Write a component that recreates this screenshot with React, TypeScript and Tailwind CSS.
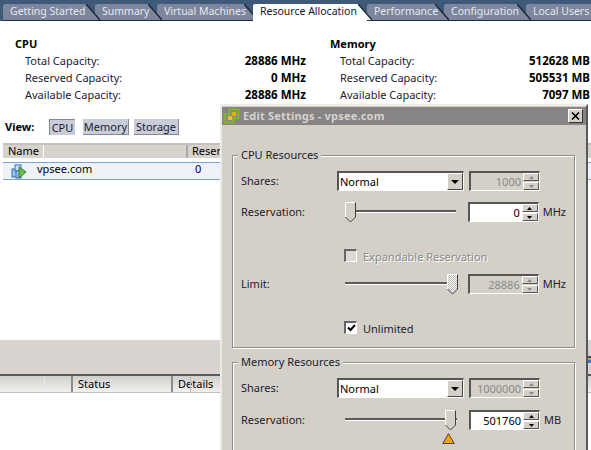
import React from "react";

const tabs: [string, number, boolean][] = [
  ["Getting Started", 92, false],
  ["Summary", 62, false],
  ["Virtual Machines", 96, false],
  ["Resource Allocation", 114, true],
  ["Performance", 77, false],
  ["Configuration", 82, false],
  ["Local Users", 80, false],
];

function Tab({ label, width, active, z }: { label: string; width: number; active: boolean; z: number }) {
  const fill = active ? "#ffffff" : "#7c869c";
  return (
    <div
      className={`relative flex-none pl-[7px] rounded-tl-[2px] leading-[15px] text-[10.5px] whitespace-nowrap ${active ? "h-[18px] bg-white text-[#10182a]" : "h-[17px] bg-[#7c869c] text-[#e6e8f0] border-b border-[#1c2c40]"}`}
      style={{ width, zIndex: z }}
    >
      <svg className="absolute right-[-5px] top-0 w-[14px] h-[17px]" viewBox="0 0 14 17">
        <polygon points="0,0 9,0 9,10.300" fill="#3f5a78" />
        <polygon points="0,0 14,16 0,16" fill={fill} />
        <line x1="0" y1="0" x2="14" y2="16" stroke="#14202e" strokeWidth="1.2" />
      </svg>
      <span className="relative">{label}</span>
    </div>
  );
}

function CapRow({ label, value, right }: { label: string; value: string; right: number }) {
  return (
    <div className="flex justify-between h-[17px] leading-[17px] pl-[10px]" style={{ width: right }}>
      <span className="text-[#1c2030]">{label}</span>
      <span className="font-bold text-black text-[11.5px]">{value}</span>
    </div>
  );
}

function Spin({ value, disabled }: { value: string; disabled?: boolean }) {
  return (
    <div className={`flex h-[20px] w-[71px] items-stretch border-t-2 border-l-2 border-t-[#555] border-l-[#555] border-r border-b border-r-white border-b-white ${disabled ? "bg-[#d4d0c8] text-[#8a8a8a]" : "bg-white text-black"}`}>
      <div className="flex-1 text-right pr-[2px] leading-[17px]">{value}</div>
      <div className="flex flex-col w-[16px] gap-px">
        {[0, 1].map((i) => (
          <div key={i} className="flex-1 bg-[#d4d0c8] border-t border-l border-white border-b-[#555] border-r-[#555] border-r border-b flex items-center justify-center">
            <svg className="w-[5px] h-[3px]" viewBox="0 0 5 3">
              <polygon points={i === 0 ? "2.5,0 5,3 0,3" : "0,0 5,0 2.5,3"} fill={disabled ? "#8a8a8a" : "#000"} />
            </svg>
          </div>
        ))}
      </div>
    </div>
  );
}

function Select() {
  return (
    <div className="flex h-[20px] w-[127px] border-t-2 border-l-2 border-t-[#555] border-l-[#555] border-r border-b border-r-white border-b-white bg-white text-black">
      <div className="flex-1 pl-[1px] leading-[18px]">Normal</div>
      <div className="w-[16px] bg-[#d4d0c8] border-t border-l border-white border-r border-b border-r-[#444] border-b-[#444] flex items-center justify-center">
        <svg className="w-[8px] h-[4px]" viewBox="0 0 8 4">
          <polygon points="0,0 8,0 4,4" fill="#000" />
        </svg>
      </div>
    </div>
  );
}

function Slider({ pos, hatched }: { pos: number; hatched?: boolean }) {
  return (
    <div className="relative w-[112px] h-[20px] ml-[8px]">
      <div className="absolute left-0 right-0 top-[8px] h-[3px] bg-[#5a5a5a] border-b border-white" />
      <svg className="absolute top-0 w-[11px] h-[21px]" style={{ left: pos }} viewBox="0 0 11 21">
        <defs>
          <pattern id="hatch" width="2" height="2" patternUnits="userSpaceOnUse">
            <rect width="2" height="2" fill="#b8b5ae" />
            <rect width="1" height="1" fill="#ffffff" />
            <rect x="1" y="1" width="1" height="1" fill="#ffffff" />
          </pattern>
        </defs>
        <polygon points="0.5,0.5 10.5,0.5 10.5,15 5.5,20 0.5,15" fill={hatched ? "url(#hatch)" : "#d4d0c8"} />
        <polyline points="0.5,15 0.5,0.5 10.5,0.5" fill="none" stroke="#fff" />
        <polyline points="10.5,0.5 10.5,15 5.5,20 0.5,15" fill="none" stroke="#404040" />
      </svg>
    </div>
  );
}

function Check({ checked }: { checked?: boolean }) {
  return (
    <div className={`flex-none w-[13px] h-[13px] border-t-2 border-l-2 border-t-[#666] border-l-[#666] border-r border-b border-white flex items-center justify-center ${checked ? "bg-white" : "bg-[#dcd8d2]"}`}>
      {checked && (
        <svg className="w-[9px] h-[8px]" viewBox="0 0 9 8">
          <polyline points="1,3.5 3.5,6 8,1" fill="none" stroke="#000" strokeWidth="2" />
        </svg>
      )}
    </div>
  );
}

function Group({ title, children, className }: { title: string; children: React.ReactNode; className?: string }) {
  return (
    <div className={`relative border border-[#8f8f8b] shadow-[1px_1px_0_#fff,inset_1px_1px_0_#fff] ml-[10px] mr-[11px] px-[8px] ${className ?? ""}`}>
      <div className="absolute left-[5px] top-[-9px] bg-[#d4d0c8] px-[3px] leading-[15px] text-[#1c2030]">{title}</div>
      {children}
    </div>
  );
}

function Row({ label, children }: { label: string; children: React.ReactNode }) {
  return (
    <div className="flex items-center h-[20px]">
      <span className="w-[96px] flex-none text-[#1c2030] pt-px">{label}</span>
      {children}
    </div>
  );
}

function App() {
  return (
    <div className="relative w-[591px] h-[450px] overflow-hidden bg-white text-[11px] font-['Noto_Sans',sans-serif]">
      <div className="flex flex-col h-full">
        <div className="h-[21px] bg-[#3f5a78] pt-[4px] pl-[3px] flex flex-none overflow-hidden">
          {tabs.map(([l, w, a], i) => (
            <Tab key={l} label={l} width={w} active={a} z={a ? 20 : 10 - i} />
          ))}
        </div>

        <div className="flex pt-[15px] flex-none h-[98px]">
          <div className="pl-[15px] w-[330px]">
            <div className="font-bold h-[16px] leading-[16px] text-black">CPU</div>
            <CapRow label="Total Capacity:" value="28886 MHz" right={291} />
            <CapRow label="Reserved Capacity:" value="0 MHz" right={291} />
            <CapRow label="Available Capacity:" value="28886 MHz" right={291} />
          </div>
          <div className="flex-1">
            <div className="font-bold h-[16px] leading-[16px] text-black">Memory</div>
            <CapRow label="Total Capacity:" value="512628 MB" right={260} />
            <CapRow label="Reserved Capacity:" value="505531 MB" right={260} />
            <CapRow label="Available Capacity:" value="7097 MB" right={260} />
          </div>
        </div>

        <div className="flex items-center h-[16px] pl-[5px] flex-none">
          <span className="font-bold w-[44px] text-black">View:</span>
          <span className="w-[26px] h-[16px] bg-[#c9cdda] border-l border-t border-[#888] text-center leading-[15px] text-[#1c2030]">CPU</span>
          <span className="ml-[8px] w-[46px] h-[16px] bg-[#c9cdda] border-r border-b border-[#888] text-center leading-[15px] text-[#1c2030]">Memory</span>
          <span className="ml-[5px] w-[45px] h-[16px] bg-[#c9cdda] border-r border-b border-[#888] text-center leading-[15px] text-[#1c2030]">Storage</span>
        </div>

        <div className="flex mt-[8px] ml-[3px] h-[16px] flex-none bg-[#d6d3cd] border-t-2 border-[#c4c1bb] border-b border-b-white text-black leading-[12px]">
          <div className="w-[41px] pl-[5px] border-r border-white">Name</div>
          <div className="w-[144px] border-r-2 border-[#aaa]" />
          <div className="flex-1 pl-[4px]">Reser</div>
        </div>
        <div className="flex items-center mt-[3px] ml-[3px] h-[18px] flex-none bg-[#eef3fb] border-y border-[#79a4d2] text-black pb-[3px]">
          <svg className="w-[16px] h-[15px] ml-[8px] mt-[3px] flex-none" viewBox="0 0 16 15">
            <rect x="1" y="5" width="6" height="8" fill="#9cc4ec" stroke="#2a6fb0" />
            <rect x="4" y="1" width="6" height="6" fill="#cfe3f6" stroke="#2a6fb0" />
            <rect x="5" y="7" width="5" height="7" fill="#9cc4ec" stroke="#2a6fb0" />
            <polygon points="8,3 15,8 8,14" fill="#6cc04a" stroke="#2f7a2a" />
          </svg>
          <span className="ml-[10px] w-[158px]">vpsee.com</span>
          <span>0</span>
        </div>

        <div className="flex-1 border-b-2 border-[#d8d5d0]" />

        <div className="h-[34px] flex-none bg-[#d8d3cf] border-b-2 border-[#55585e] flex justify-end items-center pt-[3px]">
          <svg className="w-[3px] h-[7px]" viewBox="0 0 3 7">
            <rect width="3" height="2" fill="#2a4a80" />
            <rect y="2" width="3" height="2" fill="#e0a030" />
            <rect y="4" width="3" height="3" fill="#3a78c0" />
          </svg>
        </div>
        <div className="relative flex h-[17px] flex-none bg-gradient-to-b from-[#d0cfcc] to-[#f2f1ef] border-b border-[#bfbfbf] text-black leading-[15px]">
          <div className="w-[45px] border-r border-[#e8e8e8]" />
          <div className="w-[28px] border-r-2 border-[#8c8c8c]" />
          <div className="w-[100px] pl-[5px] border-r-2 border-[#8c8c8c]">Status</div>
          <div className="flex-1 pl-[5px]">Details</div>
          <div className="absolute left-[190px] top-0 bottom-0 w-px bg-[#bdbdbd]" />
        </div>
        <div className="h-[57px] flex-none bg-white" />
      </div>

      <div className="absolute z-30 left-[220px] top-[104px] w-[368px] h-[346px] bg-[#d4d0c8] border-l-2 border-t-2 border-[#ecebe7] border-r-2 border-r-[#55585e] text-[#1c2030]">
        <div className="mt-px flex items-center h-[18px] bg-[#868484] pl-px pr-[3px]">
          <svg className="w-[17px] h-[16px] flex-none" viewBox="0 0 17 16">
            <path d="M6.500 1.500h9v8.500H10.500v4.500H1.500V6H6.500z" fill="#8a8a70" stroke="#7eb52e" strokeWidth="2" />
            <rect x="9" y="4" width="4" height="4" fill="#e8a820" />
            <rect x="5" y="8" width="4" height="4" fill="#f2bc2c" />
          </svg>
          <span className="ml-[3px] font-bold text-[#d6d3ce] flex-1 tracking-[0.2px]">Edit Settings - vpsee.com</span>
          <div className="w-[15px] h-[14px] bg-[#d4d0c8] border border-t-white border-l-white border-r-[#333] border-b-[#333] flex items-center justify-center">
            <svg className="w-[9px] h-[8px]" viewBox="0 0 9 8">
              <path d="M1 0.5L8 7.5M8 0.5L1 7.5" stroke="#000" strokeWidth="1.6" />
            </svg>
          </div>
        </div>

        <div className="pt-[30px]">
          <Group title="CPU Resources" className="h-[193px] pt-[15px]">
            <Row label="Shares:">
              <Select />
              <div className="ml-[5px]"><Spin value="1000" disabled /></div>
            </Row>
            <div className="mt-[11px]">
              <Row label="Reservation:">
                <Slider pos={0} />
                <div className="ml-[12px]"><Spin value="0" /></div>
                <span className="ml-[4px]">MHz</span>
              </Row>
            </div>
            <div className="mt-[27px] flex items-center h-[13px] pl-[103px] text-[#8b8b8b]">
              <Check />
              <span className="ml-[6px] pt-[3px] [text-shadow:1px_1px_0_#fff]">Expandable Reservation</span>
            </div>
            <div className="mt-[12px]">
              <Row label="Limit:">
                <Slider pos={102} hatched />
                <div className="ml-[12px]"><Spin value="28886" disabled /></div>
                <span className="ml-[4px]">MHz</span>
              </Row>
            </div>
            <div className="mt-[27px] flex items-center h-[13px] pl-[103px]">
              <Check checked />
              <span className="ml-[6px] pt-[3px]">Unlimited</span>
            </div>
          </Group>
          <Group title="Memory Resources" className="mt-[14px] h-[100px] pt-[15px]">
            <Row label="Shares:">
              <Select />
              <div className="ml-[5px]"><Spin value="1000000" disabled /></div>
            </Row>
            <div className="mt-[12px]">
              <Row label="Reservation:">
                <div className="relative">
                  <Slider pos={100} />
                  <svg className="absolute left-[105px] top-[23px] w-[13px] h-[11px]" viewBox="0 0 13 11">
                    <polygon points="6.5,0.7 12.3,10.500 0.7,10.500" fill="#f5a400" stroke="#444" />
                  </svg>
                </div>
                <div className="ml-[12px]"><Spin value="501760" /></div>
                <span className="ml-[4px]">MB</span>
              </Row>
            </div>
          </Group>
        </div>
      </div>
    </div>
  );
}

export default App;
